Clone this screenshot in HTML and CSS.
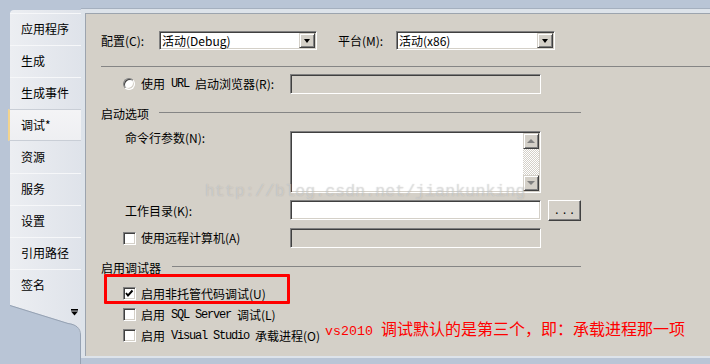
FILE: index.html
```html
<!DOCTYPE html>
<html lang="zh-CN">
<head>
<meta charset="utf-8">
<title>调试</title>
<link rel="stylesheet" href="styles.css">
</head>
<body>
<div class="app">
  <nav class="side">
    <div class="strip">
      <div class="tab">应用程序</div>
      <div class="tab">生成</div>
      <div class="tab">生成事件</div>
      <div class="tab active">调试*</div>
      <div class="tab">资源</div>
      <div class="tab">服务</div>
      <div class="tab">设置</div>
      <div class="tab">引用路径</div>
      <div class="tab">签名</div>
    </div>
    <svg class="strip-end" width="71" height="63" viewBox="0 0 71 63">
      <defs>
        <linearGradient id="sg" x1="0" y1="0" x2="1" y2="0">
          <stop offset="0" stop-color="#eceef2"/>
          <stop offset="1" stop-color="#dfe3ea"/>
        </linearGradient>
      </defs>
      <path d="M0 0 H71 V34 H70 C70 27 66 23 58 22 L0 4 Z" fill="url(#sg)"/>
      <path d="M0 4.5 L58 22.5 C66 23.5 70.5 27 70.5 34 V63" fill="none" stroke="#96a2b3" stroke-width="1"/>
      <rect x="61" y="8" width="7" height="1.6" fill="#000"/>
      <path d="M61 10.5 H68 L64.5 14.5 Z" fill="#000"/>
    </svg>
  </nav>
  <div class="frame">
    <main class="panel">
      <div class="row-config">
        <span class="lbl cfg">配置(C):</span>
        <div class="combo w158"><span class="combo-text">活动(Debug)</span><span class="drop-btn"><i class="tri"></i></span></div>
        <span class="lbl plat">平台(M):</span>
        <div class="combo w159"><span class="combo-text">活动(x86)</span><span class="drop-btn"><i class="tri"></i></span></div>
      </div>
      <div class="sep"></div>

      <div class="form-row r-url">
        <label class="opt"><span class="radio"></span>使用<span class="mono"> URL </span>启动浏览器(R):</label>
        <div class="field disabled"></div>
      </div>

      <div class="group-head"><span>启动选项</span><i class="gline"></i></div>

      <div class="form-row r-args">
        <span class="lbl indent">命令行参数(N):</span>
        <div class="field area">
          <div class="vscroll">
            <span class="sbtn"><i class="gtri up"></i></span>
            <span class="track"></span>
            <span class="sbtn"><i class="gtri down"></i></span>
          </div>
        </div>
      </div>

      <div class="form-row r-dir">
        <span class="lbl indent">工作目录(K):</span>
        <div class="field"></div>
        <span class="btn">...</span>
      </div>

      <div class="form-row r-remote">
        <label class="opt"><span class="check"></span>使用远程计算机(A)</label>
        <div class="field disabled"></div>
      </div>

      <div class="group-head g2"><span>启用调试器</span><i class="gline"></i></div>

      <div class="dbg-row first">
        <span class="check"><svg width="11" height="11" viewBox="0 0 11 11"><polyline points="2,5 4,7.5 8.5,2.5" fill="none" stroke="#000" stroke-width="1.9"/></svg></span>启用非托管代码调试(U)
        <span class="highlight"></span>
      </div>
      <div class="dbg-row">
        <span class="check"></span>启用<span class="mono"> SQL Server </span>调试(L)
      </div>
      <div class="dbg-row">
        <span class="check"></span>启用<span class="mono"> Visual Studio </span>承载进程(O)
        <span class="note"><span class="note-mono">vs2010 </span>调试默认的是第三个，即：承载进程那一项</span>
      </div>

      <div class="watermark">http://blog.csdn.net/jiankunking</div>
    </main>
  </div>
</div>
</body>
</html>
```
FILE: styles.css
```css
* { box-sizing: border-box; }
html, body { margin: 0; padding: 0; }
body {
  width: 710px;
  height: 364px;
  overflow: hidden;
  background: #b9c5d6;
  font-family: "Noto Sans CJK SC", "Liberation Sans", sans-serif;
  font-size: 12px;
  color: #000;
}
.app { display: flex; height: 364px; }

/* sidebar */
.side {
  width: 81px;
  flex: none;
  padding: 10px 0 0 10px;
  display: flex;
  flex-direction: column;
}
.strip {
  background: linear-gradient(90deg, #eceef2, #dfe3ea);
  border-radius: 4px 0 0 0;
  padding-top: 3px;
}
.tab {
  height: 32px;
  line-height: 30px;
  padding-left: 11px;
  border-top: 1px solid #f6f7f9;
  white-space: nowrap;
}
.tab.active {
  margin-left: -2px;
  background: linear-gradient(180deg, #f4f4f6, #eeeff2);
  border-left: 2px solid #f3d48e;
  border-top: 1px solid #c9ced6;
  border-bottom: 1px solid #c9ced6;
  height: 32px;
}
.tab.active + .tab { border-top-color: transparent; }
.strip-end { display: block; }

/* frame */
.frame {
  flex: 1;
  margin-top: 8px;
  height: 350px;
  border-top: 1px solid #a5b0bf;
  background: #dde3ea;
  padding: 4px 0 0 4px;
}
.panel {
  position: relative;
  height: 343px;
  background: #d4d0c8;
  border-top: 1px solid #9ca4ae;
  border-left: 1px solid #9ca4ae;
  padding: 17px 0 0 15px;
}
.lbl { white-space: nowrap; line-height: 14px; }
.mono {
  font-family: "Liberation Mono", monospace;
  font-size: 12px;
  letter-spacing: -1.2px;
  white-space: pre;
}

/* config row */
.row-config { display: flex; align-items: center; height: 19px; }
.cfg { width: 58px; }
.plat { width: 58px; margin-left: 21px; }
.combo {
  height: 19px;
  display: flex;
  align-items: center;
  background: #fff;
  border: 1px solid;
  border-color: #808080 #fff #fff #808080;
  box-shadow: inset 1px 1px 0 #404040, inset -1px -1px 0 #d4d0c8;
  padding: 1px 1px 1px 2px;
}
.w158 { width: 158px; }
.w159 { width: 159px; }
.combo-text { flex: 1; line-height: 15px; white-space: nowrap; }
.drop-btn {
  width: 16px;
  height: 15px;
  background: #d4d0c8;
  border: 1px solid;
  border-color: #d4d0c8 #404040 #404040 #d4d0c8;
  box-shadow: inset 1px 1px 0 #fff, inset -1px -1px 0 #808080;
  display: flex;
  align-items: center;
  justify-content: center;
}
.tri {
  width: 0; height: 0;
  border-left: 3.5px solid transparent;
  border-right: 3.5px solid transparent;
  border-top: 4px solid #000;
  margin-top: 1px;
}

.sep { margin-top: 16px; height: 1px; background: #858585; }

/* form rows */
.form-row { display: flex; align-items: center; }
.form-row > .lbl, .form-row > .opt { width: 189px; flex: none; }
.opt { display: flex; align-items: center; padding-left: 22px; white-space: nowrap; line-height: 14px; }
.indent { padding-left: 24px; }
.r-url { margin-top: 7px; height: 20px; }
.r-args { margin-top: 10px; height: 62px; align-items: flex-start; }
.r-dir { margin-top: 7px; height: 21px; align-items: flex-start; }
.r-dir .lbl { margin-top: 4px; }
.r-remote { margin-top: 7px; height: 20px; }

.field {
  width: 251px;
  height: 20px;
  background: #fff;
  border: 1px solid;
  border-color: #808080 #fff #fff #808080;
  box-shadow: inset 1px 1px 0 #404040, inset -1px -1px 0 #d4d0c8;
}
.field.disabled { background: #d4d0c8; }
.field.area { height: 62px; padding: 1px; display: flex; justify-content: flex-end; }

.vscroll { width: 16px; display: flex; flex-direction: column; }
.sbtn {
  height: 16px;
  flex: none;
  background: #d4d0c8;
  border: 1px solid;
  border-color: #d4d0c8 #404040 #404040 #d4d0c8;
  box-shadow: inset 1px 1px 0 #fff, inset -1px -1px 0 #808080;
  display: flex;
  align-items: center;
  justify-content: center;
}
.track {
  flex: 1;
  background-color: #fff;
  background-image: repeating-conic-gradient(#d4d0c8 0 25%, #fff 0 50%);
  background-size: 2px 2px;
}
.gtri { width: 0; height: 0; border-left: 4px solid transparent; border-right: 4px solid transparent; }
.gtri.up { border-bottom: 4px solid #808080; }
.gtri.down { border-top: 4px solid #808080; }

.btn {
  width: 33px;
  height: 21px;
  margin-left: 7px;
  background: #d4d0c8;
  border: 1px solid;
  border-color: #fff #404040 #404040 #fff;
  box-shadow: inset -1px -1px 0 #808080;
  font-family: "Liberation Mono", monospace;
  font-size: 11px;
  letter-spacing: 1px;
  display: flex;
  align-items: center;
  justify-content: center;
  padding-left: 1px;
}

/* group headers */
.group-head { display: flex; width: 480px; height: 14px; margin-top: 13px; line-height: 14px; }
.group-head span { white-space: nowrap; }
.gline { flex: 1; height: 1px; background: #858585; margin: 5px 0 0 10px; }
.g2 .gline { margin-left: 11px; }

/* checks */
.radio {
  width: 12px; height: 12px;
  margin-right: 6px;
  flex: none;
  border-radius: 50%;
  background: #fff;
  border: 1px solid;
  border-color: #808080 #fff #fff #808080;
  box-shadow: inset 1px 1px 0 #404040, inset -1px -1px 0 #d4d0c8;
}
.check {
  width: 13px; height: 13px;
  margin-right: 5px;
  flex: none;
  background: #fff;
  border: 1px solid;
  border-color: #808080 #fff #fff #808080;
  box-shadow: inset 1px 1px 0 #404040, inset -1px -1px 0 #d4d0c8;
  display: flex;
  align-items: center;
  justify-content: center;
}
.check svg { display: block; }

.dbg-row { display: flex; align-items: center; height: 21px; padding-left: 22px; white-space: nowrap; line-height: 14px; }
.dbg-row.first { margin-top: 8px; position: relative; }
.highlight {
  position: absolute;
  left: 3px;
  top: -9px;
  width: 186px;
  height: 30px;
  border: 3px solid #ff0000;
  border-radius: 1px;
}
.note {
  color: #ff0000;
  font-size: 16px;
  line-height: 18px;
  margin-left: 5px;
  margin-bottom: 11px;
}
.note-mono {
  font-family: "Liberation Mono", monospace;
  font-size: 13.3px;
  white-space: pre;
}

.watermark {
  position: absolute;
  left: 119px;
  top: 168px;
  font-family: "Liberation Mono", monospace;
  font-size: 16.7px;
  line-height: 20px;
  color: rgba(255, 255, 255, 0.35);
  text-shadow: 0 0 1px rgba(120, 120, 120, 0.45);
  white-space: nowrap;
  pointer-events: none;
}
```
